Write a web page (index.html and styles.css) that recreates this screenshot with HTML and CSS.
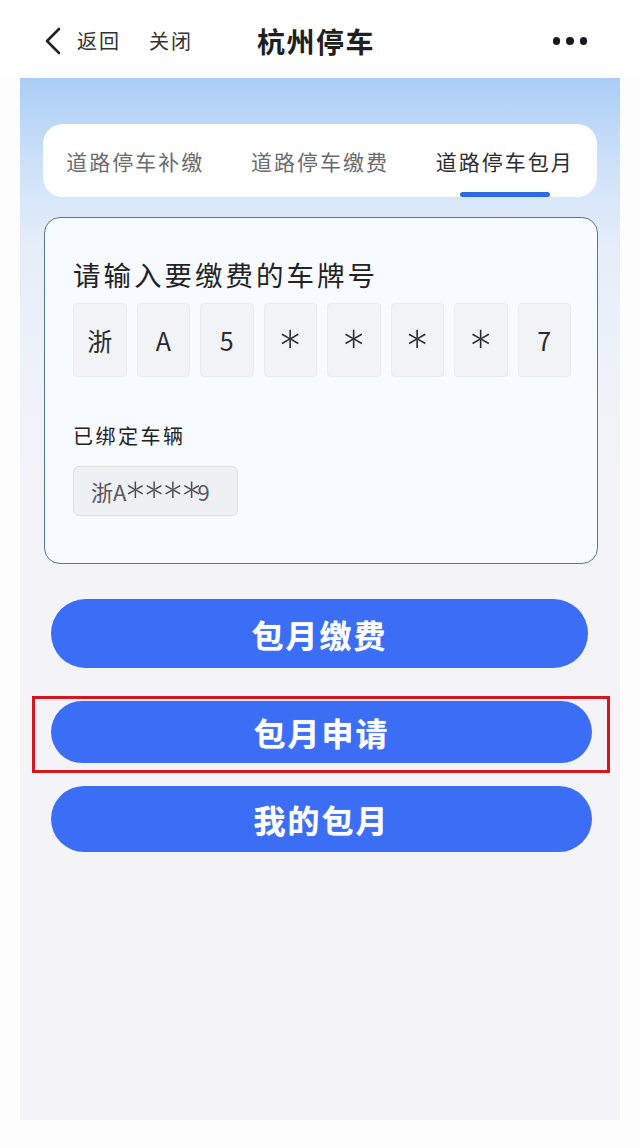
FILE: index.html
```html
<!DOCTYPE html>
<html lang="zh-CN">
<head>
<meta charset="utf-8">
<title>杭州停车</title>
<link rel="stylesheet" href="styles.css">
</head>
<body>
<header class="topbar">
  <svg class="back-icon" viewBox="0 0 18 28" width="18" height="28"><path d="M15 2 L3 14 L15 26" fill="none" stroke="#222" stroke-width="2.6" stroke-linecap="round" stroke-linejoin="round"/></svg>
  <span class="nav-link back-text">返回</span>
  <span class="nav-link close-text">关闭</span>
  <h1 class="title">杭州停车</h1>
  <div class="more"><span class="dot"></span><span class="dot"></span><span class="dot"></span></div>
</header>

<main class="panel">
  <nav class="tabs">
    <div class="tab">道路停车补缴</div>
    <div class="tab">道路停车缴费</div>
    <div class="tab tab-active">道路停车包月</div>
  </nav>

  <section class="plate-card">
    <h2 class="plate-title">请输入要缴费的车牌号</h2>
    <div class="plate-boxes">
      <div class="plate-box">浙</div>
      <div class="plate-box">A</div>
      <div class="plate-box">5</div>
      <div class="plate-box"><span class="star">*</span></div>
      <div class="plate-box"><span class="star">*</span></div>
      <div class="plate-box"><span class="star">*</span></div>
      <div class="plate-box"><span class="star">*</span></div>
      <div class="plate-box">7</div>
    </div>
    <div class="bound-label">已绑定车辆</div>
    <div class="bound-chip">浙A<span class="chip-stars">****</span>9</div>
  </section>

  <div class="actions">
    <button class="btn btn-pay">包月缴费</button>
    <div class="highlight">
      <button class="btn btn-apply">包月申请</button>
    </div>
    <button class="btn btn-mine">我的包月</button>
  </div>
</main>
</body>
</html>
```

FILE: styles.css
```css
* { box-sizing: border-box; }

html, body {
  margin: 0;
  padding: 0;
}

body {
  width: 640px;
  height: 1148px;
  background: #fdfdfe;
  font-family: "Noto Sans CJK SC", "Noto Sans", sans-serif;
  color: #333;
  overflow: hidden;
}

.topbar {
  height: 78px;
  padding: 4px 53px 0 44px;
  display: flex;
  align-items: center;
  background: #ffffff;
}

.back-icon {
  flex: none;
  display: block;
}

.nav-link {
  font-size: 20px;
  letter-spacing: 2px;
  color: #333;
  line-height: 1;
}

.back-text { margin-left: 15px; }
.close-text { margin-left: 28px; }

.title {
  margin: 0 0 0 64px;
  font-size: 28px;
  font-weight: 700;
  letter-spacing: 1.5px;
  color: #1f1f1f;
  line-height: 1;
}

.more {
  margin-left: auto;
  display: flex;
  gap: 6px;
}

.dot {
  width: 7.5px;
  height: 7.5px;
  border-radius: 50%;
  background: #1a1a22;
}

.panel {
  margin: 0 20px;
  height: 1042px;
  padding: 46px 23px 0 23px;
  background: linear-gradient(to bottom, #abcdf6 0px, #cfe2f9 90px, #e6eefa 170px, #eff2f8 300px, #f4f4f8 420px, #f4f4f8 100%);
}

.tabs {
  height: 73px;
  background: #ffffff;
  border-radius: 20px;
  display: flex;
}

.tab {
  flex: 1;
  display: flex;
  align-items: center;
  justify-content: center;
  font-size: 21px;
  letter-spacing: 2px;
  color: #6a6a6e;
  position: relative;
}

.tab-active {
  color: #2c2c30;
}

.tab-active::after {
  content: "";
  position: absolute;
  left: 50%;
  bottom: 0;
  width: 90px;
  height: 5px;
  margin-left: -45px;
  border-radius: 3px;
  background: #2f6ae2;
}

.plate-card {
  margin: 20px -1px 0 1px;
  height: 347px;
  border: 1.5px solid #56759c;
  border-radius: 16px;
  background: #f7faff;
  padding: 40px 26px 0 28px;
}

.plate-title {
  margin: 0;
  font-size: 27.5px;
  font-weight: 400;
  letter-spacing: 3px;
  line-height: 32px;
  color: #222;
}

.plate-boxes {
  margin-top: 13px;
  display: grid;
  grid-template-columns: repeat(8, 1fr);
  gap: 10px;
}

.plate-box {
  height: 74px;
  background: #f1f3f6;
  border: 1px solid #e9ebee;
  border-radius: 4px;
  display: flex;
  align-items: center;
  justify-content: center;
  font-size: 25px;
  color: #2a2a2e;
}

.star {
  font-family: "Lato", "DejaVu Sans", sans-serif;
  font-weight: 300;
  font-size: 62px;
  line-height: 1;
  padding-top: 24px;
  color: #2a2a2e;
}

.bound-label {
  margin-top: 45px;
  font-size: 20px;
  letter-spacing: 2.5px;
  line-height: 28px;
  color: #222;
}

.bound-chip {
  margin-top: 16px;
  width: 165px;
  height: 50px;
  display: flex;
  align-items: center;
  padding-left: 17px;
  background: #eef0f4;
  border: 1px solid #dcdee3;
  border-radius: 6px;
  font-size: 22px;
  color: #585860;
}

.chip-stars {
  font-family: "Lato", "DejaVu Sans", sans-serif;
  font-weight: 300;
  font-size: 56px;
  letter-spacing: -5px;
  padding-top: 21px;
  line-height: 1;
  margin-right: -1px;
  margin-left: -3px;
  color: #4a4a52;
}

.actions {
  margin: 0 -23px;
  padding-top: 35px;
  display: flex;
  flex-direction: column;
}

.btn {
  display: flex;
  align-items: center;
  justify-content: center;
  border: none;
  border-radius: 40px;
  background: #3b6ef4;
  color: #ffffff;
  font-family: "Noto Sans CJK SC", sans-serif;
  font-size: 32px;
  font-weight: 700;
  letter-spacing: 2px;
  text-shadow: 0 0 1px rgba(255,255,255,0.6);
  padding: 0;
}

.btn-pay {
  margin: 0 32px 0 31px;
  height: 69px;
}

.highlight {
  margin: 28px 10px 0 12px;
  border: 3px solid #d8141c;
  padding: 2px 15px 7px 16px;
}

.btn-apply {
  width: 100%;
  height: 62px;
}

.btn-mine {
  margin: 13px 28px 0 31px;
  height: 66px;
}
```
